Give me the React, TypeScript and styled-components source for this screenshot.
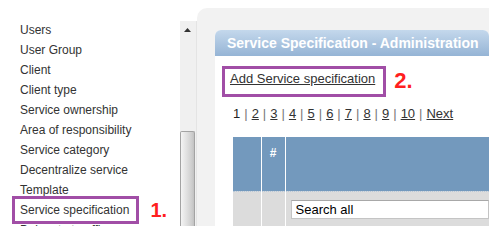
import React from 'react';
import styled, { createGlobalStyle } from 'styled-components';

const GlobalStyle = createGlobalStyle`
  html, body {
    margin: 0;
    padding: 0;
    background: #fff;
  }
  body {
    font-family: 'Liberation Sans', Arial, sans-serif;
  }
`;

const menuItems = [
  'Users',
  'User Group',
  'Client',
  'Client type',
  'Service ownership',
  'Area of responsibility',
  'Service category',
  'Decentralize service',
  'Template',
  'Service specification',
  'Delegate to office',
];

const pages = ['2', '3', '4', '5', '6', '7', '8', '9', '10'];

export default function App() {
  return (
    <>
      <GlobalStyle />
      <Screen>
        <Sidebar>
          {menuItems.map((item) =>
            item === 'Service specification' ? (
              <MenuItem key={item}>
                <Highlight>{item}</Highlight>
                <StepMarker $size={20} $gap={21}>1.</StepMarker>
              </MenuItem>
            ) : (
              <MenuItem key={item}>{item}</MenuItem>
            ),
          )}
        </Sidebar>
        <Scrollbar>
          <ArrowButton>
            <svg width="7" height="4" viewBox="0 0 7 4">
              <path d="M0 4 L3.5 0 L7 4 Z" fill="#333" />
            </svg>
          </ArrowButton>
          <Track />
          <Thumb />
        </Scrollbar>
        <Main>
          <Panel>
            <PanelHeader>Service Specification - Administration</PanelHeader>
            <PanelBody>
              <ActionRow>
                <AddLink href="#">Add Service specification</AddLink>
                <StepMarker $size={22} $gap={8}>2.</StepMarker>
              </ActionRow>
              <Pager>
                <CurrentPage>1</CurrentPage>
                {pages.map((p) => (
                  <React.Fragment key={p}>
                    <Separator>|</Separator>
                    <PageLink href="#">{p}</PageLink>
                  </React.Fragment>
                ))}
                <Separator>|</Separator>
                <PageLink href="#">Next</PageLink>
              </Pager>
              <Grid>
                <thead>
                  <tr>
                    <HeadCell $width={28} />
                    <HeadCell $width={24}>#</HeadCell>
                    <HeadCell />
                  </tr>
                </thead>
                <tbody>
                  <tr>
                    <FilterCell />
                    <FilterCell />
                    <FilterCell>
                      <SearchInput value="Search all" readOnly />
                    </FilterCell>
                  </tr>
                </tbody>
              </Grid>
            </PanelBody>
          </Panel>
        </Main>
      </Screen>
    </>
  );
}

const Screen = styled.div`
  display: flex;
  width: 489px;
  height: 226px;
  overflow: hidden;
`;

const Sidebar = styled.div`
  width: 180px;
  flex: none;
  padding-top: 20px;
`;

const MenuItem = styled.div`
  display: flex;
  align-items: center;
  height: 20px;
  padding-left: 20px;
  font-size: 12px;
  line-height: 20px;
  color: #333;
  white-space: nowrap;
`;

const Highlight = styled.span`
  display: inline-block;
  border: 3px solid #a14ea6;
  padding: 1px 7px 1px 5px;
  margin: -4px -10px -4px -8px;
  line-height: 20px;
`;

const StepMarker = styled.span<{ $size: number; $gap: number }>`
  margin-left: ${(p) => p.$gap}px;
  font-size: ${(p) => p.$size}px;
  font-weight: bold;
  line-height: 1;
  color: #ff1f1f;
`;

const Scrollbar = styled.div`
  width: 16px;
  flex: none;
  margin-top: 21px;
  display: flex;
  flex-direction: column;
  background: #f0f0f0;
  border-right: 1px solid #e4e4e4;
`;

const ArrowButton = styled.div`
  height: 17px;
  display: flex;
  align-items: center;
  justify-content: center;
  padding-right: 1px;
`;

const Track = styled.div`
  height: 93px;
`;

const Thumb = styled.div`
  flex: 1;
  width: 13px;
  border: 1px solid #a3a3a3;
  border-bottom: none;
  border-radius: 2px 2px 0 0;
  background: linear-gradient(to right, #f4f4f4, #e2e2e2 40%, #cfcfcf 80%, #c2c2c2);
`;

const Main = styled.div`
  flex: 1;
  margin-top: 8px;
  padding: 22px 0 0 18px;
  display: flex;
  flex-direction: column;
  background: #f2f2f2;
  border-top-left-radius: 10px;
  overflow: hidden;
`;

const Panel = styled.div`
  flex: 1;
  display: flex;
  flex-direction: column;
  background: #fff;
  border-radius: 6px 6px 0 0;
  overflow: hidden;
`;

const PanelHeader = styled.div`
  height: 26px;
  flex: none;
  display: flex;
  align-items: center;
  padding-left: 12px;
  background: linear-gradient(#c4d8ec, #95b4d5);
  color: #fff;
  font-size: 14px;
  font-weight: bold;
  white-space: nowrap;
`;

const PanelBody = styled.div`
  padding: 10px 0 0 7px;
`;

const ActionRow = styled.div`
  display: flex;
  align-items: flex-start;

  & > span {
    margin-top: 4px;
  }
`;

const AddLink = styled.a`
  border: 3px solid #a14ea6;
  padding: 2px 8px 7px 5px;
  font-size: 13px;
  line-height: 16px;
  color: #333;
  text-decoration: underline;
`;

const Pager = styled.div`
  margin-top: 9px;
  padding-left: 11px;
  font-size: 13px;
  line-height: 16px;
  color: #333;
  white-space: nowrap;
`;

const CurrentPage = styled.span`
  color: #222;
`;

const Separator = styled.span`
  margin: 0 4px;
  color: #777;
`;

const PageLink = styled.a`
  color: #333;
  text-decoration: underline;
`;

const Grid = styled.table`
  margin: 15px 0 0 11px;
  width: calc(100% - 11px);
  border-collapse: collapse;
`;

const HeadCell = styled.th<{ $width?: number }>`
  width: ${(p) => (p.$width ? `${p.$width}px` : 'auto')};
  height: 54px;
  padding: 9px 0 0;
  vertical-align: top;
  background: #7399bd;
  border-left: 1px solid #fff;
  border-bottom: 1px dotted #b8c8d8;
  color: #fff;
  font-size: 12px;
  font-weight: bold;
  text-align: center;
  box-sizing: border-box;

  &:first-child {
    border-left: none;
  }
`;

const FilterCell = styled.td`
  height: 35px;
  padding: 8px 0 0 5px;
  vertical-align: top;
  background: #dcdcdc;
  border-left: 1px solid #fff;
  box-sizing: border-box;

  &:first-child {
    border-left: none;
  }
`;

const SearchInput = styled.input`
  width: 100%;
  height: 19px;
  box-sizing: border-box;
  padding: 0 4px;
  border: 1px solid #c4c4c4;
  border-top-color: #a8a8a8;
  background: #fff;
  font-family: 'Liberation Sans', Arial, sans-serif;
  font-size: 13px;
  color: #000;
  outline: none;
`;
